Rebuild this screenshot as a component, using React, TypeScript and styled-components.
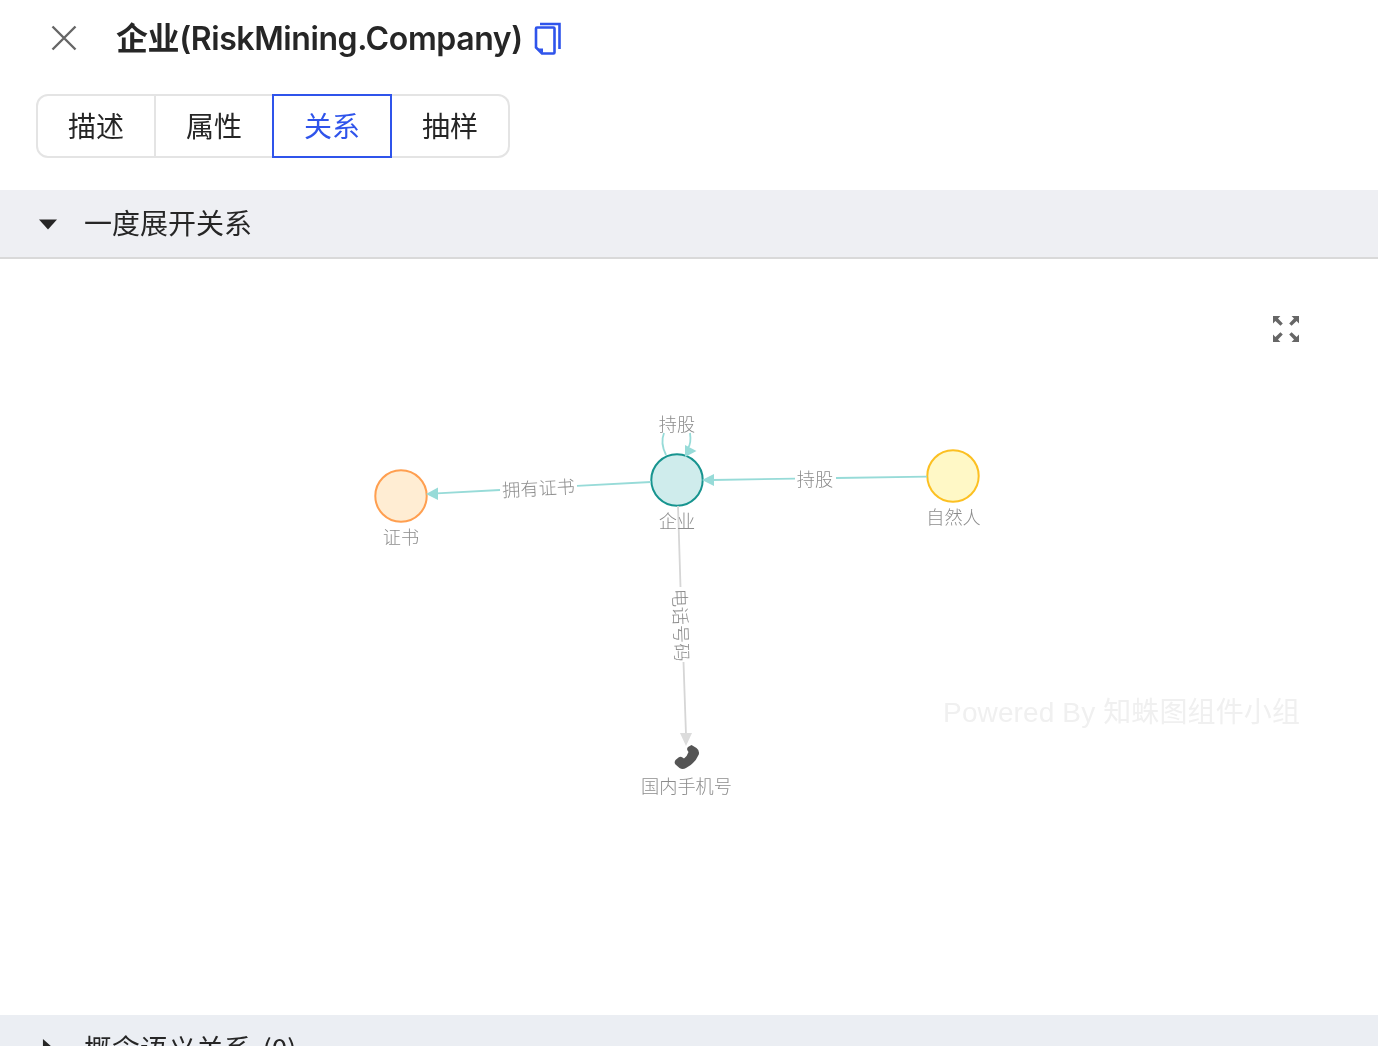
import React, { useState } from "react";
import styled, { createGlobalStyle } from "styled-components";

const FONT = `"Inter", "Noto Sans CJK SC", sans-serif`;
const CJK = `"Noto Sans CJK SC", sans-serif`;

const TABS = [
  { label: "描述", width: 120 },
  { label: "属性", width: 116 },
  { label: "关系", width: 120 },
  { label: "抽样", width: 118 },
];

function App() {
  const [active, setActive] = useState("关系");

  return (
    <Page>
      <GlobalStyle />
      <Header>
        <CloseButton aria-label="close">
          <svg width="28" height="28" viewBox="0 0 28 28">
            <path d="M2.5 2.5 L25.5 25.5 M25.5 2.5 L2.5 25.5" stroke="#666" strokeWidth="2.4" fill="none" />
          </svg>
        </CloseButton>
        <Title>企业(RiskMining.Company)</Title>
        <CopyIcon />
      </Header>

      <Tabs>
        {TABS.map((tab) => (
          <Tab
            key={tab.label}
            $width={tab.width}
            $active={tab.label === active}
            onClick={() => setActive(tab.label)}
          >
            {tab.label}
          </Tab>
        ))}
      </Tabs>

      <SectionHeader $border>
        <Caret $open />
        <SectionTitle>一度展开关系</SectionTitle>
      </SectionHeader>

      <Canvas>
        <Graph />
        <FullscreenButton aria-label="fullscreen">
          <svg width="26" height="26" viewBox="0 0 26 26" fill="#666">
            <path d="M0 0 H7.4 L5 2.4 L9.8 7.4 L7.4 9.8 L2.4 5 L0 7.4 Z" />
            <path d="M26 0 H18.6 L21 2.4 L16.2 7.4 L18.6 9.8 L23.6 5 L26 7.4 Z" />
            <path d="M0 26 H7.4 L5 23.6 L9.8 18.6 L7.4 16.2 L2.4 21 L0 18.6 Z" />
            <path d="M26 26 H18.6 L21 23.6 L16.2 18.6 L18.6 16.2 L23.6 21 L26 18.6 Z" />
          </svg>
        </FullscreenButton>
        <Watermark>Powered By 知蛛图组件小组</Watermark>
      </Canvas>

      <SectionHeader>
        <Caret />
        <SectionTitle>概念语义关系 (0)</SectionTitle>
      </SectionHeader>
    </Page>
  );
}

function CopyIcon() {
  return (
    <CopyGlyph width="28" height="34" viewBox="0 0 28 34" fill="none">
      <path d="M6 2 H25.5 V27" stroke="#2f54eb" strokeWidth="2.6" />
      <path
        d="M2 6.5 Q2 5.5 3 5.5 H19.5 Q20.5 5.5 20.5 6.5 V30.5 Q20.5 31.5 19.5 31.5 H8 L2 25.5 Z"
        stroke="#2f54eb"
        strokeWidth="2.6"
        fill="#fff"
      />
      <path d="M4 26.5 H9 V31 Z" fill="#2f54eb" />
    </CopyGlyph>
  );
}

// 좌표는 스크린샷 기준 그대로 (viewBox 가 canvas 위치만큼 밀려 있음)
function Graph() {
  return (
    <GraphSvg viewBox="0 259 1378 756">
      <circle cx="677" cy="480" r="25.7" fill="#cfecec" stroke="#17948f" strokeWidth="2" />
      <circle cx="401" cy="496" r="25.7" fill="#ffedd3" stroke="#ff9f50" strokeWidth="2" />
      <circle cx="953" cy="476" r="25.7" fill="#fff8c6" stroke="#fcc022" strokeWidth="2" />

      <Edge d="M651 482 L577 485.8 M500 490 L432 493.6" $tone="teal" />
      <polygon points="426,494 438,487.5 438,500" fill="#97dbd8" />
      <EdgeLabel x="538.5" y="487" transform="rotate(-3 538.5 487)">拥有证书</EdgeLabel>

      <Edge d="M927 476.6 L836 478 M795 478.6 L712 480" $tone="teal" />
      <polygon points="702,480 714,474 714,486" fill="#97dbd8" />
      <EdgeLabel x="815" y="477.5">持股</EdgeLabel>

      <Edge d="M666 455 C661 445 662 438 664 433 M690 433 C691 440 691 444 688 448" $tone="teal" />
      <polygon points="696.5,451 685,457 685,445" fill="#97dbd8" />
      <EdgeLabel x="677" y="422.5">持股</EdgeLabel>

      <Edge d="M678 506 L680.5 587 M683.5 662 L686 735" $tone="grey" />
      <polygon points="686,746 680,733 692,733" fill="#dcdcdc" />
      <EdgeLabel x="682" y="625" transform="rotate(88 682 625)">电话号码</EdgeLabel>

      <path
        d="M691.5 745 L696.5 748 Q699.8 750.5 698.8 754.5 Q695 763.5 686 768 Q682.5 769.8 679.5 768 L675.5 764.5 Q673.8 762.5 675.5 760 L678.5 757.5 Q680.5 756 682.5 757.5 L684 758.5 Q687 756.5 688.5 752 L687.5 750.5 Q686.5 748.5 688 747 Z"
        fill="#555"
      />

      <NodeLabel x="677" y="520">企业</NodeLabel>
      <NodeLabel x="401" y="536">证书</NodeLabel>
      <NodeLabel x="953.5" y="516">自然人</NodeLabel>
      <NodeLabel x="686.5" y="785">国内手机号</NodeLabel>
    </GraphSvg>
  );
}

const GlobalStyle = createGlobalStyle`
  html, body {
    margin: 0;
    padding: 0;
    background: #fff;
    overflow: hidden;
  }
`;

const Page = styled.div`
  width: 1378px;
  height: 1046px;
  overflow: hidden;
  font-family: ${FONT};
  color: #262626;
  will-change: transform;
`;

const Header = styled.div`
  display: flex;
  align-items: center;
  height: 76px;
  padding-left: 50px;
`;

const CloseButton = styled.button`
  display: flex;
  width: 28px;
  height: 28px;
  padding: 0;
  border: 0;
  background: none;
  margin-right: 38px;
`;

const Title = styled.h1`
  margin: 2px 11px 0 0;
  font-size: 32px;
  line-height: 44px;
  font-weight: 600;
  letter-spacing: -0.4px;
  white-space: nowrap;
`;

const CopyGlyph = styled.svg`
  display: block;
  margin-top: 2px;
`;

const Tabs = styled.div`
  display: inline-flex;
  margin: 18px 0 32px 36px;
  vertical-align: top;
`;

const Tab = styled.button<{ $active?: boolean; $width: number }>`
  box-sizing: border-box;
  width: ${({ $width }) => $width}px;
  height: 64px;
  padding: 0 0 2px;
  font-family: ${CJK};
  font-size: 28px;
  color: ${({ $active }) => ($active ? "#2f54eb" : "#262626")};
  background: #fff;
  border: 2px solid ${({ $active }) => ($active ? "#2f54eb" : "#e4e4e4")};
  border-left-width: ${({ $active }) => ($active ? "2px" : "0")};
  border-right-width: ${({ $active }) => ($active ? "2px" : "0")};

  &:first-child {
    border-left-width: 2px;
    border-right-width: 2px;
    border-radius: 12px 0 0 12px;
  }

  &:last-child {
    border-right-width: 2px;
    border-radius: 0 12px 12px 0;
  }
`;

const SectionHeader = styled.div<{ $border?: boolean }>`
  box-sizing: border-box;
  display: flex;
  align-items: center;
  gap: 27px;
  height: 69px;
  padding-left: 39px;
  font-family: ${CJK};
  font-size: 28px;
  color: #262626;
  background: ${({ $border }) => ($border ? "#eeeff3" : "#ebeef3")};
  border-bottom: ${({ $border }) => ($border ? "2px solid #d9d9d9" : "0")};
  white-space: nowrap;
`;

const SectionTitle = styled.span`
  margin-top: -4px;
  word-spacing: 4px;
`;

const Caret = styled.i<{ $open?: boolean }>`
  display: block;
  width: 18px;
  height: 18px;
  flex: none;
  margin-top: ${({ $open }) => ($open ? "2px" : "-3px")};
  background: #262626;
  clip-path: ${({ $open }) =>
    $open ? "polygon(0 22%, 100% 22%, 50% 78%)" : "polygon(22% 0, 78% 50%, 22% 100%)"};
`;

const Canvas = styled.div`
  position: relative;
  height: 756px;
  background: #fff;
`;

const GraphSvg = styled.svg`
  display: block;
  width: 1378px;
  height: 756px;
`;

const Edge = styled.path<{ $tone: "teal" | "grey" }>`
  fill: none;
  stroke: ${({ $tone }) => ($tone === "teal" ? "#97dbd8" : "#d6d6d6")};
  stroke-width: 1.8;
`;

const NodeLabel = styled.text`
  font-family: ${CJK};
  font-size: 18.2px;
  font-weight: 300;
  fill: #8c8c8c;
  text-anchor: middle;
  dominant-baseline: central;
`;

const EdgeLabel = styled(NodeLabel)``;

const FullscreenButton = styled.button`
  position: absolute;
  top: 57px;
  right: 79px;
  display: flex;
  width: 26px;
  height: 26px;
  padding: 0;
  border: 0;
  background: none;
`;

const Watermark = styled.div`
  position: absolute;
  top: 434px;
  right: 78px;
  font-family: "Liberation Sans", "Noto Sans CJK SC", sans-serif;
  font-size: 28px;
  line-height: 40px;
  letter-spacing: 0.12px;
  color: #f0f0f0;
  white-space: nowrap;
`;

export default App;
